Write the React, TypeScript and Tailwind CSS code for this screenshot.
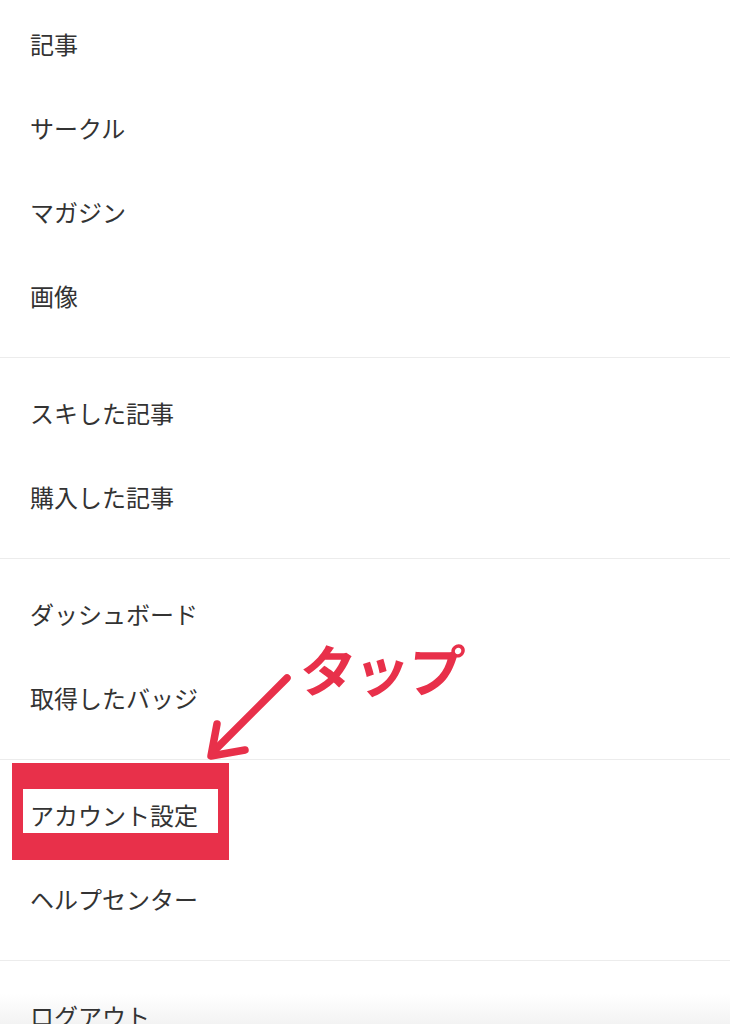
import React from "react";

const sections: string[][] = [
  ["記事", "サークル", "マガジン", "画像"],
  ["スキした記事", "購入した記事"],
  ["ダッシュボード", "取得したバッジ"],
  ["アカウント設定", "ヘルプセンター"],
  ["ログアウト"],
];

const font = { fontFamily: '"Noto Sans CJK JP", "Noto Sans", sans-serif' };

const App = () => {
  return (
    <div className="relative w-[730px] h-[1024px] overflow-hidden bg-white" style={font}>
      {/* bottom fade, behind the menu */}
      <div className="absolute left-0 right-0 bottom-0 h-[30px] bg-gradient-to-b from-white to-[#f3f3f3]" />

      <div className="relative flex flex-col">
        {sections.map((items, i) => (
          <div
            key={i}
            className={
              i === 0
                ? "pt-[2px] pb-[19px] border-b border-[#ececec]"
                : "pt-[13px] pb-[19px] border-b border-[#ececec]"
            }
          >
            {items.map((label) => (
              <div key={label} className="h-[84px] flex items-center pl-[30px] text-[24px] text-[#333333]">
                {label}
              </div>
            ))}
          </div>
        ))}
      </div>

      {/* annotation: box round the item */}
      <div className="absolute left-[12px] top-[763px] w-[217px] h-[97px] border-[#e8304a] border-l-[11px] border-r-[11px] border-t-[26px] border-b-[27px]" />

      {/* annotation: arrow */}
      <svg className="absolute left-0 top-0" width="730" height="1024" viewBox="0 0 730 1024">
        <g stroke="#e8304a" strokeWidth="7.5" strokeLinecap="round" strokeLinejoin="round" fill="none">
          <line x1="287" y1="678" x2="213" y2="752" />
          <polyline points="217,724 211,756 245,750" />
        </g>
      </svg>

      {/* annotation: label */}
      <div className="absolute left-[300px] top-[640px] text-[56px] font-bold leading-none text-[#e8304a] tracking-[-2px] -skew-x-6">
        タップ
      </div>
    </div>
  );
};

export default App;
